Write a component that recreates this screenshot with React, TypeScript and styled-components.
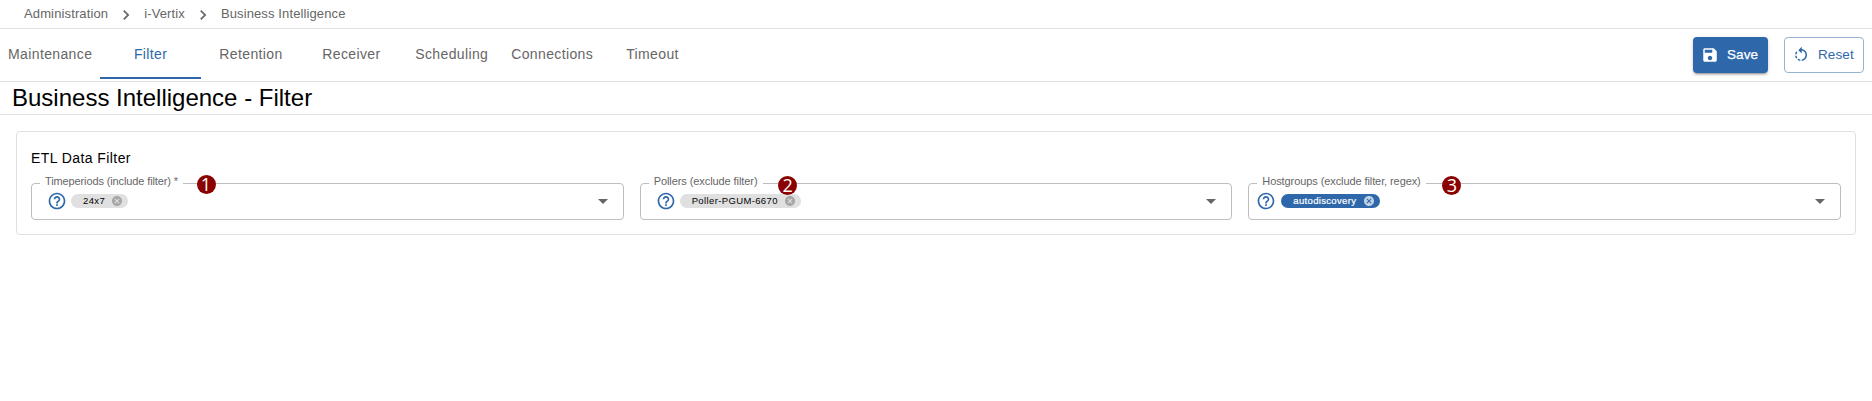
import React from "react";
import styled, { createGlobalStyle } from "styled-components";

const BLUE = "#2e68aa";

const GlobalStyle = createGlobalStyle`
  * { box-sizing: border-box; }
  body {
    margin: 0;
    background: #fff;
    color: #000;
    font-family: "Liberation Sans", Arial, sans-serif;
  }
`;

const Breadcrumbs = styled.nav`
  display: flex;
  align-items: center;
  height: 29px;
  padding: 0 0 0 24px;
  border-bottom: 1px solid #e0e0e0;
  color: #666;
  font-size: 13px;
  line-height: 20px;
`;

const Crumb = styled.span<{ $spacing: number }>`
  letter-spacing: ${(p) => p.$spacing}px;
  white-space: nowrap;
`;

const Separator = styled.svg`
  width: 20px;
  height: 20px;
  margin: 1px 8px 0;
  fill: #666;
`;

const Toolbar = styled.header`
  display: flex;
  justify-content: space-between;
  height: 53px;
  padding-right: 8px;
  border-bottom: 1px solid #e0e0e0;
`;

const Tabs = styled.div`
  display: flex;
  height: 50px;
`;

const Tab = styled.button<{ $active?: boolean }>`
  width: 100.4px;
  padding: 0 0 1px;
  border: 0;
  background: none;
  box-shadow: ${(p) => (p.$active ? `inset 0 -2px ${BLUE}` : "none")};
  color: ${(p) => (p.$active ? BLUE : "#666")};
  font: 14px "Liberation Sans", Arial, sans-serif;
  letter-spacing: 0.37px;
  white-space: nowrap;
`;

const Actions = styled.div`
  display: flex;
  gap: 16px;
  padding-top: 8px;
`;

const ActionButton = styled.button<{ $primary?: boolean }>`
  display: flex;
  align-items: center;
  gap: 8px;
  width: ${(p) => (p.$primary ? 75 : 80)}px;
  height: 36px;
  padding: 0 0 1px ${(p) => (p.$primary ? 8 : 7)}px;
  border: ${(p) => (p.$primary ? "0" : "1px solid #96b3d4")};
  border-radius: 4px;
  background: ${(p) => (p.$primary ? BLUE : "#fff")};
  box-shadow: ${(p) =>
    p.$primary
      ? "0 3px 1px -2px rgba(0,0,0,.2), 0 2px 2px rgba(0,0,0,.14), 0 1px 5px rgba(0,0,0,.12)"
      : "none"};
  color: ${(p) => (p.$primary ? "#fff" : BLUE)};
  font: 13.5px "Liberation Sans", Arial, sans-serif;
  -webkit-text-stroke: ${(p) => (p.$primary ? "0.25px #fff" : "0")};
  letter-spacing: 0.1px;
`;

const ButtonIcon = styled.svg<{ $size: number }>`
  flex: none;
  width: ${(p) => p.$size}px;
  height: ${(p) => p.$size}px;
  fill: currentColor;
`;

const Title = styled.h1`
  height: 33px;
  margin: 0;
  padding-left: 12px;
  border-bottom: 1px solid #e0e0e0;
  font-size: 24px;
  font-weight: 400;
  line-height: 32px;
`;

const Card = styled.section`
  height: 104px;
  margin: 16px 16px 0;
  padding: 16px 14px 0;
  border: 1px solid #e0e0e0;
  border-radius: 4px;
`;

const CardTitle = styled.h2`
  height: 35px;
  margin: 0;
  font-size: 14px;
  font-weight: 400;
  line-height: 20px;
  letter-spacing: 0.42px;
`;

const Fields = styled.div`
  display: grid;
  grid-template-columns: repeat(3, 1fr);
  gap: 16px;
`;

const Field = styled.div<{ $indent: number }>`
  position: relative;
  display: flex;
  align-items: center;
  height: 37px;
  padding: 0 6px 1px ${(p) => p.$indent}px;
  border: 1px solid #bdbdbd;
  border-radius: 4px;
`;

const FieldLabel = styled.label<{ $width: number; $spacing: number }>`
  position: absolute;
  top: -11px;
  left: 8px;
  width: ${(p) => p.$width}px;
  padding-left: 5px;
  background: #fff;
  color: #666;
  font-size: 11px;
  line-height: 16px;
  letter-spacing: ${(p) => p.$spacing}px;
  white-space: nowrap;
`;

const HelpIcon = styled.svg`
  width: 20px;
  height: 20px;
  fill: ${BLUE};
`;

const Chip = styled.span<{ $filled?: boolean; $width: number; $spacing: number }>`
  display: flex;
  align-items: center;
  justify-content: space-between;
  width: ${(p) => p.$width}px;
  height: 14px;
  margin-left: ${(p) => (p.$filled ? 5 : 4)}px;
  padding: 0 5px 0 12px;
  border-radius: 7px;
  background: ${(p) => (p.$filled ? BLUE : "#e0e0e0")};
  color: ${(p) => (p.$filled ? "#fff" : "#000")};
  -webkit-text-stroke: ${(p) => (p.$filled ? "0.2px #fff" : "0")};
  font-size: 9.5px;
  line-height: 14px;
  letter-spacing: ${(p) => p.$spacing}px;
  white-space: nowrap;
`;

const RemoveIcon = styled.svg<{ $filled?: boolean }>`
  flex: none;
  width: 12px;
  height: 12px;
  fill: ${(p) => (p.$filled ? "#c0d2e6" : "#a6a6a6")};
`;

const Arrow = styled.svg`
  width: 24px;
  height: 24px;
  margin-left: auto;
  margin-right: 2px;
  fill: #666;
`;

const Marker = styled.span<{ $x: number; $y: number }>`
  position: absolute;
  left: ${(p) => p.$x}px;
  top: ${(p) => p.$y}px;
  width: 19px;
  height: 19px;
  border-radius: 50%;
  background: #8b0000;
  color: #fff;
  font: 18px/18px "Open Sans", sans-serif;
  text-align: center;
`;

const crumbs = [
  { text: "Administration", spacing: 0.13 },
  { text: "i-Vertix", spacing: 0.12 },
  { text: "Business Intelligence", spacing: 0.12 },
];

const tabs = ["Maintenance", "Filter", "Retention", "Receiver", "Scheduling", "Connections", "Timeout"];

const fields = [
  {
    label: "Timeperiods (include filter) *", labelWidth: 143, labelSpacing: -0.12, indent: 15,
    chip: "24x7", chipWidth: 57, chipSpacing: 0.4, filled: false, x: 164.5, y: -9,
  },
  {
    label: "Pollers (exclude filter)", labelWidth: 114, labelSpacing: -0.08, indent: 15,
    chip: "Poller-PGUM-6670", chipWidth: 121, chipSpacing: 0.37, filled: false, x: 137.5, y: -8.5,
  },
  {
    label: "Hostgroups (exclude filter, regex)", labelWidth: 169, labelSpacing: -0.09, indent: 7,
    chip: "autodiscovery", chipWidth: 99, chipSpacing: 0.33, filled: true, x: 193, y: -8.5,
  },
];

export default function App() {
  return (
    <>
      <GlobalStyle />
      <Breadcrumbs>
        {crumbs.map((c, i) => (
          <React.Fragment key={c.text}>
            {i > 0 && (
              <Separator viewBox="0 0 24 24">
                <path d="M10 6 8.59 7.41 13.17 12l-4.58 4.59L10 18l6-6z" />
              </Separator>
            )}
            <Crumb $spacing={c.spacing}>{c.text}</Crumb>
          </React.Fragment>
        ))}
      </Breadcrumbs>
      <Toolbar>
        <Tabs>
          {tabs.map((t) => (
            <Tab key={t} $active={t === "Filter"}>{t}</Tab>
          ))}
        </Tabs>
        <Actions>
          <ActionButton $primary>
            <ButtonIcon $size={18} viewBox="0 0 24 24">
              <path d="M17 3H5c-1.11 0-2 .9-2 2v14c0 1.1.89 2 2 2h14c1.1 0 2-.9 2-2V7l-4-4zm-5 16c-1.66 0-3-1.34-3-3s1.34-3 3-3 3 1.34 3 3-1.34 3-3 3zm3-10H5V5h10v4z" />
            </ButtonIcon>
            Save
          </ActionButton>
          <ActionButton>
            <ButtonIcon $size={18} viewBox="0 0 24 24">
              <path d="M7.11 8.53 5.7 7.11C4.8 8.27 4.24 9.61 4.07 11h2.02c.14-.87.49-1.72 1.02-2.47zM6.09 13H4.07c.17 1.39.72 2.73 1.62 3.89l1.41-1.42c-.52-.75-.87-1.59-1.01-2.47zm1.01 5.32c1.16.9 2.51 1.44 3.9 1.61V17.9c-.87-.15-1.71-.49-2.46-1.03L7.1 18.32zM13 4.07V1L8.45 5.55 13 10V6.09c2.84.48 5 2.94 5 5.91s-2.16 5.43-5 5.91v2.02c3.95-.49 7-3.85 7-7.93s-3.05-7.44-7-7.93z" />
            </ButtonIcon>
            Reset
          </ActionButton>
        </Actions>
      </Toolbar>
      <Title>Business Intelligence - Filter</Title>
      <Card>
        <CardTitle>ETL Data Filter</CardTitle>
        <Fields>
          {fields.map((f, i) => (
            <Field key={f.label} $indent={f.indent}>
              <FieldLabel $width={f.labelWidth} $spacing={f.labelSpacing}>{f.label}</FieldLabel>
              <HelpIcon viewBox="0 0 24 24">
                <path d="M11 18h2v-2h-2v2zm1-16C6.48 2 2 6.48 2 12s4.48 10 10 10 10-4.48 10-10S17.52 2 12 2zm0 18c-4.41 0-8-3.59-8-8s3.59-8 8-8 8 3.59 8 8-3.59 8-8 8zm0-14c-2.21 0-4 1.79-4 4h2c0-1.1.9-2 2-2s2 .9 2 2c0 2-3 1.75-3 5h2c0-2.25 3-2.5 3-5 0-2.21-1.79-4-4-4z" />
              </HelpIcon>
              <Chip $filled={f.filled} $width={f.chipWidth} $spacing={f.chipSpacing}>
                {f.chip}
                <RemoveIcon $filled={f.filled} viewBox="0 0 24 24">
                  <path d="M12 2C6.47 2 2 6.47 2 12s4.47 10 10 10 10-4.47 10-10S17.53 2 12 2zm5 13.59L15.59 17 12 13.41 8.41 17 7 15.59 10.59 12 7 8.41 8.41 7 12 10.59 15.59 7 17 8.41 13.41 12 17 15.59z" />
                </RemoveIcon>
              </Chip>
              <Arrow viewBox="0 0 24 24">
                <path d="m7 10 5 5 5-5z" />
              </Arrow>
              <Marker $x={f.x} $y={f.y}>{i + 1}</Marker>
            </Field>
          ))}
        </Fields>
      </Card>
    </>
  );
}
